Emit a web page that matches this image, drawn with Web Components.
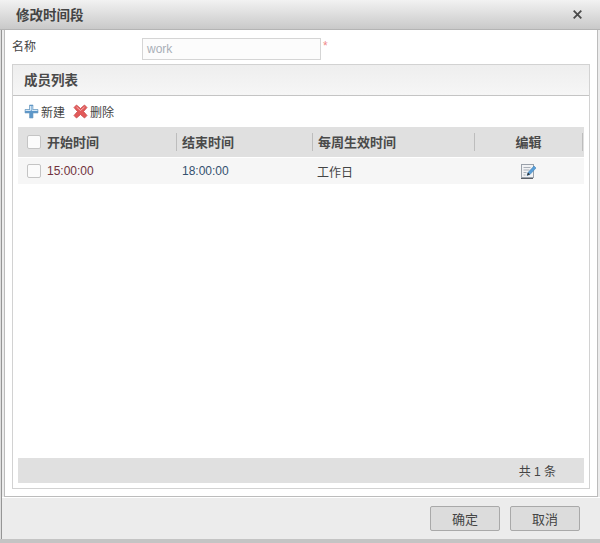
<!DOCTYPE html>
<html>
<head>
<meta charset="utf-8">
<style>
  html, body { margin: 0; height: 100%; overflow: hidden; background: #fff; }
  body { font: 12px "Liberation Sans", "Noto Sans CJK SC", sans-serif; color: #444; }
</style>
</head>
<body>
<edit-dialog title-text="修改时间段">
  <form-row label="名称" value="work"></form-row>
  <list-panel title-text="成员列表">
    <list-toolbar></list-toolbar>
    <time-grid></time-grid>
  </list-panel>
  <dialog-button slot="footer" label="确定"></dialog-button>
  <dialog-button slot="footer" label="取消"></dialog-button>
</edit-dialog>

<script>
const dialogTemplate = document.createElement('template')
dialogTemplate.innerHTML = `
<style>
  :host { display: flex; flex-direction: column; width: 600px; height: 543px; box-sizing: border-box;
    background: linear-gradient(90deg, #dedede 1px, #959595 1px, #959595 2px, #ececec 2px);
    padding-left: 2px; border-bottom: 4px solid #c4c4c4; }
  header { flex: none; height: 30px; margin-left: -2px; box-sizing: border-box; border-bottom: 1px solid #b4b4b4;
    background: linear-gradient(#f2f2f2, #c9c9c9); display: flex; align-items: center; justify-content: space-between;
    padding: 0 18px 1px 16px; font-weight: bold; font-size: 13.500px; color: #444; }
  header svg { display: block; }
  .body { flex: none; height: 467px; box-sizing: border-box; margin: 0 2px; background: #fff;
    border: 1px solid #bcbcbc; border-top: 0; padding: 5px 7px 0 7px; display: flex; flex-direction: column; }
  footer { flex: 1; display: flex; justify-content: flex-end; align-items: center; gap: 10px; padding: 0 20px 0 0; border-top: 1px solid #fff; }
</style>
<header><span></span>
  <svg width="9" height="9" viewBox="0 0 9 9"><path d="M.7.7 8.300 8.300M8.300.7 .7 8.300" stroke="#4a4a4a" stroke-width="1.800"/></svg>
</header>
<div class="body"><slot></slot></div>
<footer><slot name="footer"></slot></footer>`

customElements.define('edit-dialog', class extends HTMLElement {
  constructor () {
    super()
    this.attachShadow({ mode: 'open' }).appendChild(dialogTemplate.content.cloneNode(true))
    this.shadowRoot.querySelector('header span').textContent = this.getAttribute('title-text')
  }
})

const rowTemplate = document.createElement('template')
rowTemplate.innerHTML = `
<style>
  :host { display: flex; flex: none; height: 26px; box-sizing: border-box; padding-top: 3px; align-items: flex-start; }
  label { width: 130px; color: #444; line-height: 18px; }
  .input { width: 179px; height: 22px; box-sizing: border-box; border: 1px solid #d5d5d5; background: #fcfcfc;
    color: #a9afb8; padding: 0 4px; line-height: 20px; }
  i { font-style: normal; color: #f08a8a; margin-left: 2px; line-height: 16px; }
</style>
<label></label><div class="input"></div><i>*</i>`

customElements.define('form-row', class extends HTMLElement {
  constructor () {
    super()
    this.attachShadow({ mode: 'open' }).appendChild(rowTemplate.content.cloneNode(true))
    this.shadowRoot.querySelector('label').textContent = this.getAttribute('label')
    this.shadowRoot.querySelector('.input').textContent = this.getAttribute('value')
  }
})

const panelTemplate = document.createElement('template')
panelTemplate.innerHTML = `
<style>
  :host { display: flex; flex-direction: column; flex: none; height: 425px; box-sizing: border-box; margin-top: 3px;
    border: 1px solid #d2d2d2; padding: 0 5px 5px 5px; }
  h2 { flex: none; margin: 0 -5px; height: 31px; box-sizing: border-box; padding: 0 11px 2px; display: flex; align-items: center;
    font-size: 13.500px; font-weight: bold; color: #4a4a4a; background: linear-gradient(#eeeeee, #f6f6f6); border-bottom: 1px solid #c4c4c4; }
</style>
<h2></h2><slot></slot>`

customElements.define('list-panel', class extends HTMLElement {
  constructor () {
    super()
    this.attachShadow({ mode: 'open' }).appendChild(panelTemplate.content.cloneNode(true))
    this.shadowRoot.querySelector('h2').textContent = this.getAttribute('title-text')
  }
})

customElements.define('list-toolbar', class extends HTMLElement {
  constructor () {
    super()
    this.attachShadow({ mode: 'open' }).innerHTML = `
    <style>
      :host { display: flex; flex: none; height: 31px; align-items: center; padding: 0 0 0 6px; gap: 8px; color: #444; }
      span { display: flex; align-items: center; gap: 2px; }
      svg { display: block; }
    </style>
    <span>
      <svg width="15" height="15" viewBox="0 0 15 15">
        <path d="M5.500 1h3.500v4.500h5v3.500h-5v5h-3.500v-5h-4.500v-3.500h4.500z" fill="#5d97c9" stroke="#6e9cc0" stroke-width=".6"/>
        <path d="M6.500 2v4.500h-5M8 2v4.500h5.500" fill="none" stroke="#d6e8f6" stroke-width="1"/>
      </svg>新建</span>
    <span>
      <svg width="15" height="15" viewBox="0 0 15 15">
        <path d="M3.500 1 7.500 4.500 11.500 1 14 3.500 10.500 7.500 14 11.500 11.500 14 7.500 10.500 3.500 14 1 11.500 4.500 7.500 1 3.500z" fill="#e25a5a" stroke="#c94a4a" stroke-width=".8"/>
        <path d="M3.500 3 7.500 6.500 11.500 3" fill="none" stroke="#f6b3b3" stroke-width="1"/>
      </svg>删除</span>`
  }
})

const gridTemplate = document.createElement('template')
gridTemplate.innerHTML = `
<style>
  :host { display: flex; flex-direction: column; flex: 1; min-height: 0; }
  .row { display: grid; grid-template-columns: 159px 136px 162px 1fr; flex: none; }
  .head { height: 30px; background: #e0e0e0; font-size: 13px; font-weight: bold; color: #4a4a4a; margin-bottom: 1px; }
  .head > div { display: flex; align-items: center; padding: 0 0 2px 5px; box-sizing: border-box; position: relative; }
  .head > div::after { content: ""; position: absolute; right: 0; top: 6px; height: 18px; width: 1px; background: #bdbdbd; }
  .head > div:last-child::after { right: 1px; }
  .head > div:last-child { justify-content: center; padding: 0 2px 2px 0; }
  .body { height: 26px; background: #f6f6f6; }
  .body > div { display: flex; align-items: center; padding-left: 5px; box-sizing: border-box; color: #34506e; }
  .body > div:last-child { justify-content: center; padding: 0 2px 0 0; }
  .first { gap: 6px; padding-left: 9px !important; }
  .head .box { position: relative; top: 1px; }
  .box { width: 14px; height: 14px; box-sizing: border-box; border: 1px solid #c4c4c4; border-radius: 2px; background: #fbfbfb; }
  .start { color: #70323c; }
  .days { color: #444 !important; padding-left: 4px !important; }
  .spacer { flex: 1; }
  .total { flex: none; height: 25px; background: #e0e0e0; display: flex; align-items: center; justify-content: flex-end; padding-right: 28px; color: #444; }
  svg { display: block; }
</style>
<div class="row head">
  <div class="first"><span class="box"></span>开始时间</div>
  <div>结束时间</div>
  <div>每周生效时间</div>
  <div>编辑</div>
</div>
<div class="row body">
  <div class="first"><span class="box"></span><span class="start">15:00:00</span></div>
  <div>18:00:00</div>
  <div class="days">工作日</div>
  <div>
    <svg width="17" height="16" viewBox="0 0 17 16">
      <rect x="1.500" y="1.500" width="12" height="13" fill="#f1f2f4" stroke="#9aa1aa"/>
      <path d="M1 15.500h12" stroke="#5b6068"/>
      <path d="M3.500 4.500h7M3.500 7h6M3.500 9.500h3M3.500 12h2" stroke="#aab0b8"/>
      <path d="M7 12.500 8 9.500 14 3l2 2-6 6.500z" fill="#5a9fd8" stroke="#3a7cb3" stroke-width=".5"/>
      <path d="M7 12.500l3-1-2-2z" fill="#333"/>
    </svg>
  </div>
</div>
<div class="spacer"></div>
<div class="total">共 1 条</div>`

customElements.define('time-grid', class extends HTMLElement {
  constructor () {
    super()
    this.attachShadow({ mode: 'open' }).appendChild(gridTemplate.content.cloneNode(true))
  }
})

customElements.define('dialog-button', class extends HTMLElement {
  constructor () {
    super()
    this.attachShadow({ mode: 'open' }).innerHTML = `
    <style>
      :host { display: block; }
      div { width: 70px; height: 25px; box-sizing: border-box; border: 1px solid #a9a9a9; border-radius: 2px;
        background: #dcdcdc; color: #444; font-size: 13px; display: flex; align-items: center; justify-content: center; }
    </style>
    <div>${this.getAttribute('label')}</div>`
  }
})
</script>
</body>
</html>
